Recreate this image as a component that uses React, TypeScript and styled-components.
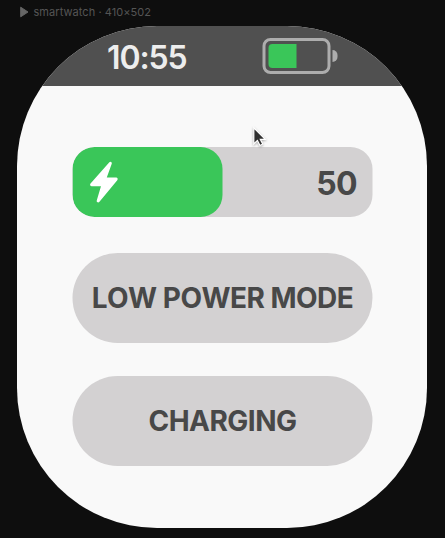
import React from "react";
import styled, { createGlobalStyle } from "styled-components";

const GlobalStyle = createGlobalStyle`
  * { box-sizing: border-box; }
  html, body { margin: 0; background: #0e0e0e; overflow: hidden; }
  body { font-family: Inter, "Liberation Sans", sans-serif; }
`;

const Page = styled.main`
  width: 444px;
  height: 538px;
  background: #0e0e0e;
  display: flex;
  flex-direction: column;
  align-items: center;
`;

const Caption = styled.div`
  width: 410px;
  height: 26px;
  flex: none;
  padding: 0 0 2px 3px;
  display: flex;
  align-items: center;
  gap: 4.5px;
  font-size: 11px;
  letter-spacing: 0.06px;
  color: #555;
  white-space: nowrap;
`;

const Watch = styled.section`
  width: 410px;
  height: 502px;
  flex: none;
  border-radius: 140px;
  overflow: hidden;
  background: #f9f9f9;
`;

const StatusBar = styled.header`
  height: 60px;
  padding: 0 89px 0 90px;
  display: flex;
  align-items: center;
  justify-content: space-between;
  background: #505050;
`;

const Time = styled.time`
  font-size: 32px;
  line-height: 39px;
  font-weight: 600;
  letter-spacing: -1.1px;
  color: #ededed;
  padding-top: 3px;
`;

const Battery = styled.div`
  display: flex;
  align-items: center;
  gap: 2px;
  transform: translateX(0.5px);
`;

const BatteryCase = styled.div`
  width: 68px;
  height: 36px;
  border: 3px solid #adadad;
  border-radius: 8px;
  padding: 3px;
`;

const BatteryLevel = styled.div`
  width: 28px;
  height: 24px;
  border-radius: 4px 0 0 4px;
  background: #3ac659;
`;

const BatteryCap = styled.div`
  width: 5px;
  height: 12px;
  border-radius: 0 6px 6px 0;
  margin-right: 1px;
  background: #adadad;
`;

const Content = styled.div`
  padding-top: 61px;
  display: flex;
  flex-direction: column;
  align-items: center;
  transform: translateX(0.5px);
`;

const ChargeBar = styled.div`
  width: 300px;
  height: 70px;
  margin-bottom: 36px;
  border-radius: 22px;
  overflow: hidden;
  background: #d3d1d2;
  display: flex;
  justify-content: space-between;
  align-items: center;
`;

const ChargeFill = styled.div`
  width: 150px;
  height: 70px;
  padding-left: 17px;
  border-radius: 22px;
  background: #3ac659;
  display: flex;
  align-items: center;
`;

const ChargeValue = styled.span`
  padding: 3px 15.5px 0 0;
  font-size: 32px;
  line-height: 39px;
  font-weight: 700;
  letter-spacing: -0.64px;
  color: #484848;
`;

const ModeButton = styled.button`
  width: 300px;
  height: 90px;
  margin: 0 0 33px;
  padding: 0;
  border: 0;
  border-radius: 45px;
  background: #d3d1d2;
  color: #484848;
  font: 700 28px/34px Inter, "Liberation Sans", sans-serif;
  font-kerning: none;
  letter-spacing: -0.52px;
  white-space: nowrap;
`;

const Cursor = styled.svg`
  position: absolute;
  left: 249.5px;
  top: 124.5px;
  filter: drop-shadow(0 1px 1px rgba(0, 0, 0, 0.3));
`;

export default function App() {
  return (
    <>
      <GlobalStyle />
      <Page>
        <Caption>
          <svg width="9" height="12" viewBox="0 0 9 12" fill="#666" stroke="#666" strokeLinejoin="round">
            <path d="M.7 1.2 8 6 .7 10.8Z" />
          </svg>
          <span>smartwatch · 410×502</span>
        </Caption>
        <Watch>
          <StatusBar>
            <Time>10:55</Time>
            <Battery>
              <BatteryCase><BatteryLevel /></BatteryCase>
              <BatteryCap />
            </Battery>
          </StatusBar>
          <Content>
            <ChargeBar>
              <ChargeFill>
                <svg width="29" height="42" viewBox="0 0 29 42" fill="#fff" stroke="#fff" strokeWidth="2" strokeLinejoin="round">
                  <path d="M20.6 2 1.8 23.2c-.4.5-.2 1 .4 1H12.8L8.2 39.7c-.2.8.5 1 1 .4L27 18.5c.4-.5.2-1-.4-1H15.9L21.3 2.4c.2-.6-.3-.8-.7-.4Z" />
                </svg>
              </ChargeFill>
              <ChargeValue>50</ChargeValue>
            </ChargeBar>
            <ModeButton>LOW POWER MODE</ModeButton>
            <ModeButton>CHARGING</ModeButton>
          </Content>
        </Watch>
      </Page>
      <Cursor width="18" height="24" viewBox="0 0 18 24">
        <path d="M3.8 2.8v16.2l3.6-3.6 2.6 5.1 2.8-1.4-2.5-4.8h5Z" fill="#303030" stroke="#fff" strokeWidth="1.2" />
      </Cursor>
    </>
  );
}
